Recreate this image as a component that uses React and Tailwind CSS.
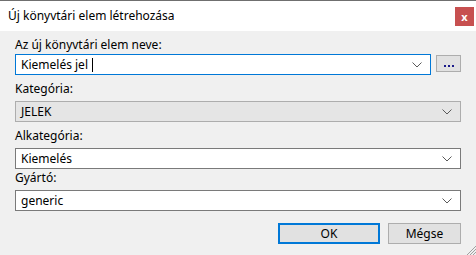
import React from "react";

const font = { fontFamily: '"Noto Sans", "Open Sans", sans-serif' };

const Chevron = () => (
  <svg width="10" height="6" viewBox="0 0 10 6" className="shrink-0">
    <path d="M0.5 0.5 L5 5 L9.5 0.5" fill="none" stroke="#5a5a5a" strokeWidth="1" />
  </svg>
);

const Combo = ({ value, disabled }) => (
  <div
    className={
      "h-[21px] flex items-center pl-[5px] pr-[8px] border " +
      (disabled ? "bg-[#e5e5e5] border-[#adadad]" : "bg-white border-[#7a7a7a]")
    }
  >
    <span className="flex-1 text-[12px] text-black leading-none">{value}</span>
    <Chevron />
  </div>
);

const Label = ({ children, className }) => (
  <div className={"text-[12px] text-black leading-[16px] " + (className || "")}>{children}</div>
);

export default function App() {
  return (
    <div className="w-[476px] h-[255px] flex flex-col bg-[#f0f0f0] overflow-hidden relative" style={font}>
      {/* title bar */}
      <div className="h-[31px] shrink-0 bg-white border-t border-[#6f6f6f] flex items-center pl-[8px] pr-[2px]">
        <span className="flex-1 text-[12px] text-black">Új könyvtári elem létrehozása</span>
        <button className="w-[19px] h-[19px] bg-[#c75050] text-white text-[11px] font-bold leading-none flex items-center justify-center">
          x
        </button>
      </div>

      {/* body */}
      <div className="flex flex-col px-[15px] pt-[6px]">
        <Label className="h-[17px]">Az új könyvtári elem neve:</Label>
        <div className="flex items-start gap-[5px]">
          <div className="w-[416px] h-[21px] flex items-center pl-[5px] pr-[8px] bg-white border border-[#0078d7]">
            <span className="flex-1 text-[12px] text-black leading-none flex items-center">
              <span>Kiemelés jel</span>
              <span className="inline-block ml-[4px] w-px h-[14px] bg-black" />
            </span>
            <Chevron />
          </div>
          <button className="mt-px w-[25px] h-[17px] bg-[#e1e1e1] border border-[#adadad] flex items-center justify-center gap-[2px] pt-[4px]">
            <span className="w-[2px] h-[2px] bg-[#1a1a8a]" />
            <span className="w-[2px] h-[2px] bg-[#1a1a8a]" />
            <span className="w-[2px] h-[2px] bg-[#1a1a8a]" />
          </button>
        </div>

        <Label className="mt-[6px] h-[20px]">Kategória:</Label>
        <Combo value="JELEK" disabled />

        <Label className="mt-[6px] h-[20px]">Alkategória:</Label>
        <Combo value="Kiemelés" />

        <Label className="mt-[1px] h-[20px]">Gyártó:</Label>
        <Combo value="generic" />

        <div className="flex justify-end gap-[8px] mt-[12px]">
          <button className="w-[102px] h-[21px] bg-[#e1e1e1] border-2 border-[#0078d7] text-[12px] text-black leading-none">
            OK
          </button>
          <button className="w-[73px] h-[21px] bg-[#e1e1e1] border border-[#adadad] text-[12px] text-black leading-none">
            Mégse
          </button>
        </div>
      </div>

      {/* resize grip */}
      <svg width="10" height="10" viewBox="0 0 10 10" className="absolute right-0 bottom-0">
        <path d="M10 1 L1 10 M10 4 L4 10 M10 7 L7 10" stroke="#a0a0a0" strokeWidth="1" />
      </svg>
    </div>
  );
}
